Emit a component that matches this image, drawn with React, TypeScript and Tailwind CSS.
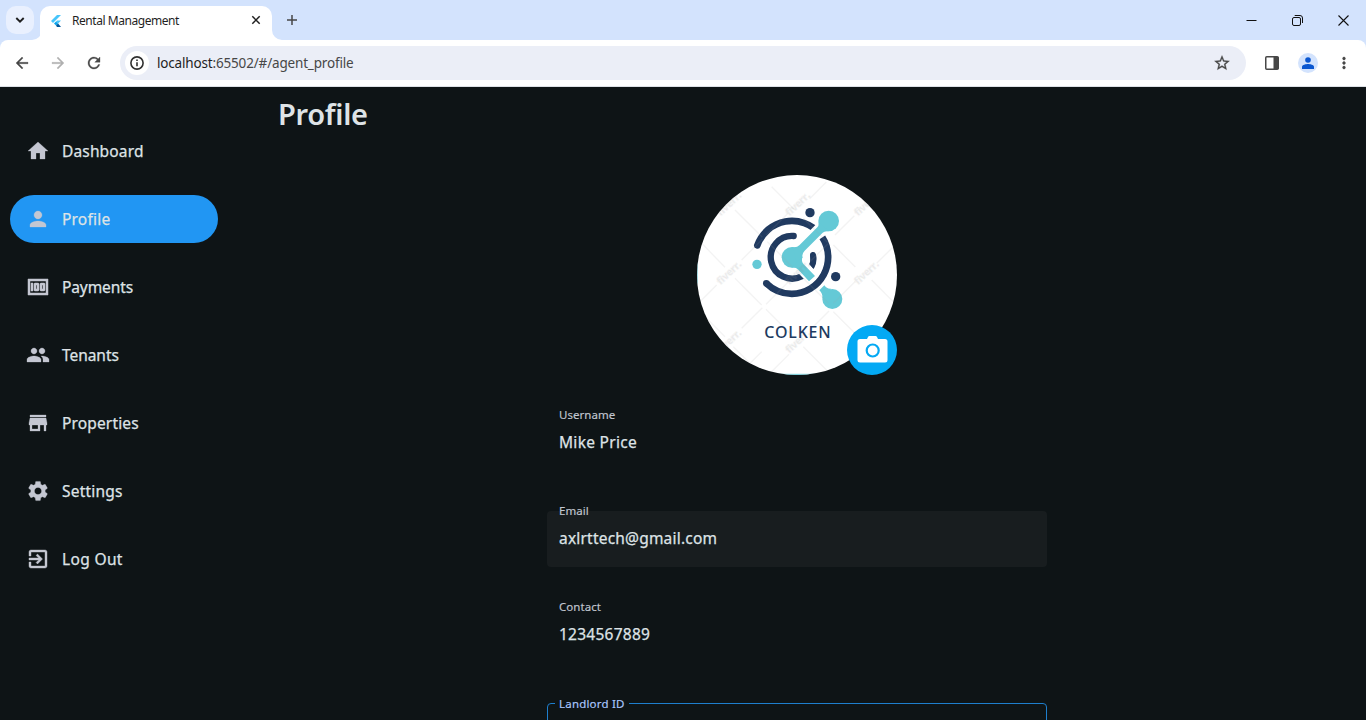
import type { ReactNode } from "react";

const navItems = [
  {
    label: "Dashboard",
    path: "M10 20v-6h4v6h5v-8h3L12 3 2 12h3v8z",
    tracking: "tracking-[0.15px]",
  },
  {
    label: "Profile",
    path: "M12 12c2.210 0 4-1.790 4-4s-1.790-4-4-4-4 1.790-4 4 1.790 4 4 4zm0 2c-2.670 0-8 1.340-8 4v2h16v-2c0-2.660-5.330-4-8-4z",
    tracking: "tracking-[0.2px]",
    active: true,
  },
  {
    label: "Payments",
    path: "M5 8h2v8H5zm7 0H9c-.55 0-1 .45-1 1v6c0 .55.45 1 1 1h3c.55 0 1-.45 1-1V9c0-.55-.45-1-1-1zm-1 6h-1v-4h1v4zm7-6h-3c-.55 0-1 .45-1 1v6c0 .55.45 1 1 1h3c.55 0 1-.45 1-1V9c0-.55-.45-1-1-1zm-1 6h-1v-4h1v4zM2 4v16h20V4H2zm2 14V6h16v12H4z",
    tracking: "tracking-[-0.1px]",
    stroke: 0.5,
  },
  {
    label: "Tenants",
    path: "M16 11c1.660 0 2.990-1.340 2.990-3S17.660 5 16 5c-1.660 0-3 1.340-3 3s1.340 3 3 3zm-8 0c1.660 0 2.990-1.340 2.990-3S9.660 5 8 5C6.340 5 5 6.340 5 8s1.340 3 3 3zm0 2c-2.330 0-7 1.170-7 3.500V19h14v-2.500c0-2.330-4.670-3.500-7-3.500zm8 0c-.29 0-.62.02-.97.05 1.160.84 1.970 1.970 1.970 3.450V19h6v-2.500c0-2.330-4.670-3.500-7-3.500z",
    tracking: "tracking-[-0.05px]",
  },
  {
    label: "Properties",
    path: "M20 4H4v2h16V4zm1 10v-2l-1-5H4l-1 5v2h1v6h10v-6h4v6h2v-6h1zm-9 4H6v-4h6v4z",
    tracking: "tracking-[0.15px]",
  },
  {
    label: "Settings",
    path: "M19.140 12.940c.04-.3.06-.61.06-.94 0-.32-.02-.64-.07-.94l2.030-1.580c.18-.14.23-.41.12-.61l-1.920-3.320c-.12-.22-.37-.29-.59-.22l-2.390.96c-.5-.38-1.030-.7-1.620-.94l-.36-2.540c-.04-.24-.24-.41-.48-.41h-3.840c-.24 0-.43.17-.47.41l-.36 2.540c-.59.24-1.130.57-1.620.94l-2.390-.96c-.22-.08-.47 0-.59.22L2.740 8.870c-.12.21-.08.47.12.61l2.030 1.580c-.05.3-.09.63-.09.94s.02.64.07.94l-2.030 1.580c-.18.14-.23.41-.12.61l1.920 3.320c.12.22.37.29.59.22l2.390-.96c.5.38 1.030.7 1.620.94l.36 2.540c.05.24.24.41.48.41h3.840c.24 0 .44-.17.47-.41l.36-2.540c.59-.24 1.130-.56 1.620-.94l2.390.96c.22.08.47 0 .59-.22l1.920-3.320c.12-.22.07-.47-.12-.61l-2.010-1.580zM12 15.600c-1.980 0-3.600-1.620-3.600-3.600s1.620-3.600 3.600-3.600 3.600 1.620 3.600 3.600-1.620 3.600-3.600 3.600z",
    tracking: "tracking-[0.2px]",
  },
  {
    label: "Log Out",
    path: "M10.090 15.590L11.500 17l5-5-5-5-1.410 1.410L12.670 11H3v2h9.670l-2.580 2.590zM19 3H5c-1.110 0-2 .9-2 2v4h2V5h14v14H5v-4H3v4c0 1.100.89 2 2 2h14c1.100 0 2-.9 2-2V5c0-1.100-.9-2-2-2z",
    tracking: "tracking-[0.35px]",
    stroke: 0.4,
  },
];

const toolbarPaths = {
  back: "M20 11H7.830l5.590-5.590L12 4l-8 8 8 8 1.410-1.410L7.830 13H20v-2z",
  forward: "M12 4l-1.410 1.410L16.170 11H4v2h12.170l-5.580 5.590L12 20l8-8z",
  refresh:
    "M17.650 6.350A7.958 7.958 0 0 0 12 4c-4.420 0-7.990 3.580-7.990 8s3.570 8 7.990 8c3.730 0 6.840-2.550 7.730-6h-2.080A5.990 5.990 0 0 1 12 18c-3.310 0-6-2.690-6-6s2.690-6 6-6c1.660 0 3.140.69 4.220 1.780L13 11h7V4l-2.350 2.350z",
  star: "M22 9.240l-7.190-.62L12 2 9.190 8.630 2 9.240l5.460 4.730L5.820 21 12 17.270 18.180 21l-1.630-7.030L22 9.240zM12 15.400l-3.760 2.270 1-4.280-3.320-2.880 4.380-.38L12 6.100l1.710 4.040 4.380.38-3.320 2.880 1 4.280L12 15.400z",
  more: "M12 8c1.100 0 2-.9 2-2s-.9-2-2-2-2 .9-2 2 .9 2 2 2zm0 2c-1.100 0-2 .9-2 2s.9 2 2 2 2-.9 2-2-.9-2-2-2zm0 6c-1.100 0-2 .9-2 2s.9 2 2 2 2-.9 2-2-.9-2-2-2z",
};

function ToolbarIcon({ path, className = "" }: { path: string; className?: string }) {
  return (
    <svg
      className={`h-[18px] w-[18px] shrink-0 ${className}`}
      viewBox="0 0 24 24"
      fill="currentColor"
      stroke="currentColor"
      strokeWidth="0.4"
    >
      <path d={path} />
    </svg>
  );
}

function FlutterMark() {
  return (
    <svg className="h-3 w-[10px] shrink-0" viewBox="0 0 10 12">
      <path d="M6 0h4L2 8 0 6z" fill="#47c5fb" />
      <path d="M6 5.500h4L7.100 8.600 5 6.600z" fill="#47c5fb" />
      <path d="M3 8.500l2-2 2.100 2.100L5 10.500z" fill="#0aa5ee" />
      <path d="M5 10.500l2.100-1.900L10 12H6z" fill="#01579b" />
    </svg>
  );
}

function TabStrip() {
  return (
    <div className="flex h-10 shrink-0 bg-[#d3e3fd]">
      <div className="ml-[6px] mt-[6px] flex h-7 w-7 items-center justify-center rounded-[10px] bg-[#e9f0fe]">
        <svg className="h-[6px] w-[10px]" viewBox="0 0 10 6" fill="none" stroke="#1f1f1f" strokeWidth="1.9">
          <path d="M1.300 1L5 4.600 8.700 1" />
        </svg>
      </div>
      <svg className="-ml-1 h-2.5 w-2.5 shrink-0 translate-x-[2px] self-end" viewBox="0 0 10 10">
        <path d="M10 0v10H0A10 10 0 0 0 10 0z" fill="#fff" />
      </svg>
      <div className="mt-[6px] flex h-[34px] w-[232px] items-center rounded-t-[10px] bg-white pb-[5px] pl-[11px] pr-[11px]">
        <FlutterMark />
        <span className="ml-[11px] grow whitespace-nowrap text-[12px] leading-4 tracking-[-0.45px] text-[#1f1f1f]">
          Rental Management
        </span>
        <svg className="-mt-px h-2.5 w-2.5" viewBox="0 0 10 10" stroke="#1f1f1f" strokeWidth="1.5">
          <path d="M1.300 1.300l7.400 7.400M8.700 1.300L1.300 8.700" />
        </svg>
      </div>
      <svg className="h-2.5 w-2.5 shrink-0 self-end" viewBox="0 0 10 10">
        <path d="M0 0v10h10A10 10 0 0 1 0 0z" fill="#fff" />
      </svg>
      <svg className="ml-[5px] mt-[15px] h-[10px] w-[10px]" viewBox="0 0 10 10" stroke="#474747" strokeWidth="1.5">
        <path d="M5 0v10M0 5h10" />
      </svg>
      <div className="ml-auto mr-[17px] flex h-10 items-center gap-[35px]">
        <svg className="h-[11px] w-[11px]" viewBox="0 0 11 11" stroke="#111" strokeWidth="1">
          <path d="M0.500 5.500h10" />
        </svg>
        <svg className="h-[11px] w-[11px]" viewBox="0 0 11 11" fill="none" stroke="#111" strokeWidth="1">
          <rect x="0.5" y="2.5" width="8" height="8" rx="1.5" />
          <path d="M2.700 0.500H8a2.500 2.500 0 0 1 2.500 2.500v5" />
        </svg>
        <svg className="h-[11px] w-[11px]" viewBox="0 0 11 11" stroke="#111" strokeWidth="1.1">
          <path d="M0.500 0.500l10 10M10.500 0.500l-10 10" />
        </svg>
      </div>
    </div>
  );
}

function Toolbar() {
  return (
    <div className="bg-[#d3e3fd]">
      <div className="flex h-[47px] shrink-0 items-center rounded-t-[8px] border-b border-[#dde1e6] bg-white pl-[13px] text-[#474747]">
        <ToolbarIcon path={toolbarPaths.back} />
        <ToolbarIcon path={toolbarPaths.forward} className="ml-[18px] text-[#b0b0b0]" />
        <ToolbarIcon path={toolbarPaths.refresh} className="ml-[18px]" />
        <div className="ml-[17px] flex h-[34px] w-[1126px] items-center rounded-full bg-[#ebeef7] pl-[5px] pr-[15px]">
          <div className="flex h-6 w-6 items-center justify-center rounded-full bg-white">
            <svg className="h-[14px] w-[14px]" viewBox="0 0 14 14" fill="none" stroke="#303030" strokeWidth="1.6">
              <circle cx="7" cy="7" r="6.1" />
              <path d="M7 6.200v4.100M7 3.600v1.500" />
            </svg>
          </div>
          <span className="ml-2 text-[13.5px] leading-5 tracking-[-0.17px] text-[#474747]">
            <span className="text-[#1f1f1f]">localhost</span>:65502/#/agent_profile
          </span>
          <ToolbarIcon path={toolbarPaths.star} className="ml-auto" />
        </div>
        <svg className="ml-[19px] h-[14px] w-[14px]" viewBox="0 0 14 14">
          <rect x="0.75" y="0.75" width="12.5" height="12.5" rx="1" fill="none" stroke="#474747" strokeWidth="1.5" />
          <rect x="8.5" y="1" width="5" height="12" fill="#474747" />
        </svg>
        <div className="ml-[19px] flex h-5 w-5 items-center justify-center rounded-full bg-[#d3e3fd]">
          <svg className="h-3 w-3" viewBox="0 0 12 12" fill="#0b57d0">
            <circle cx="6" cy="3" r="2.8" />
            <path d="M0 12V9.800C0 7.800 4 7 6 7s6 .8 6 2.800V12z" />
          </svg>
        </div>
        <ToolbarIcon path={toolbarPaths.more} className="ml-[17px]" />
      </div>
    </div>
  );
}

function Sidebar() {
  return (
    <nav className="flex w-[228px] shrink-0 flex-col gap-5 px-[10px] pt-10">
      {navItems.map(({ label, path, tracking, active, stroke }) => (
        <a
          key={label}
          className={
            active
              ? "flex h-12 items-center gap-3 rounded-full bg-[#2196f3] px-4"
              : "flex h-12 items-center gap-3 rounded-full px-4"
          }
        >
          <svg
            className="h-6 w-6 shrink-0 text-[#c4c7d2]"
            viewBox="0 0 24 24"
            fill="currentColor"
            stroke="currentColor"
            strokeWidth={stroke ?? 0.3}
          >
            <path d={path} />
          </svg>
          <span className={`text-[15.5px] leading-6 text-[#dee3e6] [-webkit-text-stroke:0.25px] ${tracking}`}>
            {label}
          </span>
        </a>
      ))}
    </nav>
  );
}

const watermarks = [
  [118, 117],
  [324, 117],
  [530, 117],
  [118, 323],
  [324, 323],
  [530, 323],
  [118, 529],
  [324, 529],
];

function CompanyLogo() {
  return (
    <svg className="h-[200px] w-[200px]" viewBox="21 30 600 600">
      <defs>
        <clipPath id="disc">
          <circle cx="321" cy="330" r="300" />
        </clipPath>
      </defs>
      <g clipPath="url(#disc)">
        <rect x="21" y="30" width="600" height="600" fill="#fff" />
        <g stroke="#203a60" fill="none" strokeLinecap="round">
          <path d="M202 241A110 110 0 0 1 390 207" strokeWidth="20" />
          <path d="M311 213A64 64 0 1 0 337 333" strokeWidth="19" />
          <path d="M369 270Q374 288 364 306" strokeWidth="18" />
        </g>
        <path d="M322 264L410 176" stroke="#fff" strokeWidth="42" />
        <path d="M309 277L370 341" stroke="#fff" strokeWidth="42" />
        <path d="M360 270h17q3 22-7 41l-11-13q3-14 1-28z" fill="#203a60" />
        <path
          d="M397 217A110 110 0 0 1 305.500 386.500A110 110 0 0 1 229 355"
          stroke="#203a60"
          strokeWidth="20"
          fill="none"
        />
        <circle cx="229" cy="355" r="10" fill="#203a60" />
        <g fill="#64c9d6">
          <circle cx="306" cy="277" r="31" />
          <circle cx="416" cy="168" r="31" />
          <circle cx="427" cy="402" r="30" />
          <circle cx="201" cy="298" r="14" />
          <path d="M306 246Q320 249 328 241L382 187Q387 182 386 170L416 199Q404 197 398 203L344 257Q335 266 337 278L320 290z" />
          <path d="M337 275Q333 289 341 298L375 333 357 349 325 314Q317 306 304 308z" />
          <path d="M388 376L403 361Q411 373 424 371L397 400Q399 386 388 376z" />
        </g>
        <g fill="#203a60">
          <circle cx="360" cy="143" r="14" />
          <circle cx="437" cy="335" r="14" />
        </g>
        <g stroke="#a0a0a0" strokeOpacity="0.13" strokeWidth="4">
          <path d="M245 65l66 66M340 160l72 72M359 101l50-50M135 135l82 82M550 135l-65-65M21 205l66-66M155 285l62-62M228 211l66-66M340 340l75 75M435 210l58-58M430 240l66 66M21 220l84 87M232 230l75 75M555 135l70 70M30 410l50-50M155 490l62-62M135 340l80 80M228 418l66-66M360 290l57-57M430 415l65-65M545 345l75 75M560 295l50-50M105 515l-66-66M228 433l82 82M430 440l80 80M360 495l57-57M235 630l62-62M340 545l72 72M130 545l90 90M155 620l60-60" />
        </g>
        <g
          fill="#909090"
          fillOpacity="0.12"
          stroke="#909090"
          strokeOpacity="0.07"
          strokeWidth="5"
          fontFamily="Open Sans, sans-serif"
          fontWeight="700"
          fontSize="29"
          textAnchor="middle"
        >
          {watermarks.map(([x, y]) => (
            <text key={`${x}-${y}`} x={x} y={y} transform={`rotate(-43 ${x} ${y})`} dy="9">
              fiverr.
            </text>
          ))}
        </g>
        <text
          x="223"
          y="519"
          fontFamily="Noto Sans, sans-serif"
          fontWeight="500"
          fontSize="48"
          textLength="199"
          fill="#203a60"
        >
          COLKEN
        </text>
        <path d="M262 628h116" stroke="#64c9d6" strokeWidth="3" />
        <path d="M22 285v70" stroke="#64c9d6" strokeWidth="2" />
      </g>
    </svg>
  );
}

function CameraIcon() {
  return (
    <svg className="-mt-px h-[27px] w-[31px]" viewBox="0 0 31 27">
      <path
        d="M3 3h7l1-2q.4-1 1.500-1h6q1.100 0 1.500 1l1 2h7a2.500 2.500 0 0 1 2.500 2.500v18.500a2.500 2.500 0 0 1-2.500 2.500H3a2.500 2.500 0 0 1-2.500-2.500V5.500A2.500 2.500 0 0 1 3 3z"
        fill="#fff"
      />
      <circle cx="15.700" cy="14.500" r="6" fill="none" stroke="#03a9f4" strokeWidth="2.200" />
    </svg>
  );
}

function Field({
  label,
  children,
  boxClass = "",
  valueClass = "",
}: {
  label: string;
  children: ReactNode;
  boxClass?: string;
  valueClass?: string;
}) {
  return (
    <div className={`relative mb-10 h-14 w-[500px] rounded px-3 pt-[15px] ${boxClass}`}>
      <span className="absolute left-3 top-[-8px] text-[11.5px] leading-4 tracking-[0.05px] text-[#c1c6d0] [-webkit-text-stroke:0.15px]">
        {label}
      </span>
      <span className={`block text-[15.5px] leading-6 text-[#dee3e6] [-webkit-text-stroke:0.25px] ${valueClass}`}>
        {children}
      </span>
    </div>
  );
}

function ProfilePage() {
  return (
    <main className="flex grow flex-col pl-[50px] pt-[7px]">
      <h1 className="h-10 text-[29px] font-semibold leading-10 tracking-[-0.3px] text-[#dee3e6]">Profile</h1>
      <div className="mt-[41px] flex w-[1038px] flex-col items-center">
        <div className="relative h-[200px] w-[200px]">
          <CompanyLogo />
          <button className="absolute bottom-0 right-0 flex h-[50px] w-[50px] items-center justify-center rounded-full bg-[#03a9f4]">
            <CameraIcon />
          </button>
        </div>
        <form className="mt-10 flex flex-col">
          <Field label="Username" valueClass="tracking-[0.3px]">
            Mike Price
          </Field>
          <Field label="Email" boxClass="bg-[#181d1f]" valueClass="tracking-[0.2px]">
            axlrttech@gmail.com
          </Field>
          <Field label="Contact" valueClass="tracking-[0.25px]">
            1234567889
          </Field>
          <fieldset className="-mt-2 h-16 w-[500px] rounded border border-[#1e7fcd] pl-[7px]">
            <legend className="relative top-px px-1 text-[11.5px] leading-4 tracking-[0.2px] text-[#aac7ff] [-webkit-text-stroke:0.15px]">
              Landlord ID
            </legend>
          </fieldset>
        </form>
      </div>
    </main>
  );
}

export default function App() {
  return (
    <div className="flex h-[720px] w-[1366px] flex-col overflow-hidden bg-[#0e1416] font-['Noto_Sans','Open_Sans',sans-serif]">
      <TabStrip />
      <Toolbar />
      <div className="flex min-h-0 grow">
        <Sidebar />
        <ProfilePage />
      </div>
    </div>
  );
}
